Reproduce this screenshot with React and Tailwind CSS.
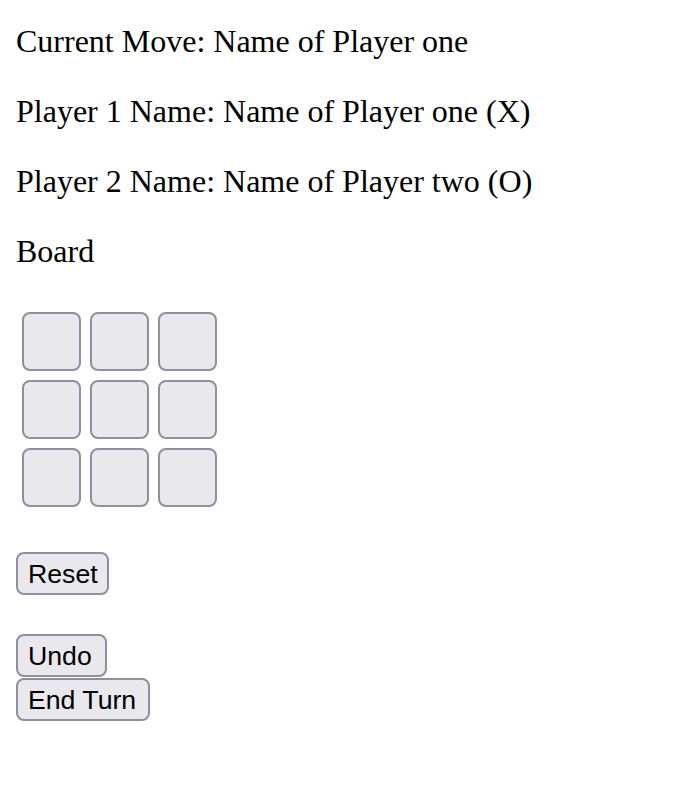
import React from "react";

function Cell() {
  return (
    <button className="w-[59px] h-[59px] rounded-[8px] border-2 border-[#8f8f9d] bg-[#e9e9ed]" />
  );
}

function Btn({ children, w }) {
  return (
    <button
      className={`h-[43px] ${w} flex items-center justify-start pl-[10px] rounded-[8px] border-2 border-[#8f8f9d] bg-[#e9e9ed] text-[26.67px] text-black font-['Liberation_Sans',Arial,sans-serif]`}
    >
      {children}
    </button>
  );
}

export default function App() {
  return (
    <div className="min-h-[786px] bg-white pl-4 pt-[22px] text-black font-['Liberation_Serif','Times_New_Roman',serif]">
      <div className="flex flex-col gap-[32px] text-[32px] leading-[38px]">
        <p>Current Move: Name of Player one</p>
        <p>Player 1 Name: Name of Player one (X)</p>
        <p>Player 2 Name: Name of Player two (O)</p>
        <p>Board</p>
      </div>
      <div className="mt-[42px] pl-[6px] grid grid-cols-[59px_59px_59px] gap-[9px] w-fit">
        {Array.from({ length: 9 }).map((_, i) => (
          <Cell key={i} />
        ))}
      </div>
      <div className="mt-[45px] flex flex-col items-start">
        <Btn w="w-[93px]">Reset</Btn>
        <div className="mt-[39px]">
          <Btn w="w-[91px]">Undo</Btn>
        </div>
        <div className="mt-[1px]">
          <Btn w="w-[134px]">End Turn</Btn>
        </div>
      </div>
    </div>
  );
}
